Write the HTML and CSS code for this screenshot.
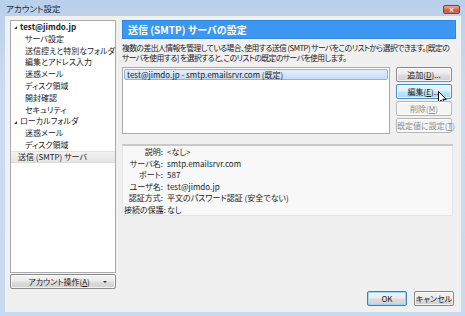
FILE: index.html
```html
<!DOCTYPE html>
<html lang="ja">

<head>
    <meta charset="UTF-8">
    <title>アカウント設定</title>
    <link rel="stylesheet" href="styles.css">
</head>

<body>
    <div class="window">
        <div class="titlebar">
            <span class="title">アカウント設定</span>
            <span class="close-btn">&#x2715;</span>
        </div>
        <div class="client">
            <aside class="sidebar">
                <ul class="tree">
                    <li class="tree-group"><span class="twisty"></span><b>test@jimdo.jp</b></li>
                    <li class="tree-leaf">サーバ設定</li>
                    <li class="tree-leaf">送信控えと特別なフォルダ</li>
                    <li class="tree-leaf">編集とアドレス入力</li>
                    <li class="tree-leaf">迷惑メール</li>
                    <li class="tree-leaf">ディスク領域</li>
                    <li class="tree-leaf">開封確認</li>
                    <li class="tree-leaf">セキュリティ</li>
                    <li class="tree-group"><span class="twisty"></span>ローカルフォルダ</li>
                    <li class="tree-leaf">迷惑メール</li>
                    <li class="tree-leaf">ディスク領域</li>
                    <li class="tree-top selected">送信 (SMTP) サーバ</li>
                </ul>
                <button class="btn btn-menu">アカウント操作(<u>A</u>)<span class="menu-dot"></span></button>
            </aside>

            <section class="pane">
                <h1 class="pane-header">送信 (SMTP) サーバの設定</h1>
                <p class="pane-desc">複数の差出人情報を管理している場合、使用する送信 (SMTP) サーバをこのリストから選択できます。[既定の<br>サーバを使用する] を選択すると、このリストの既定のサーバを使用します。</p>

                <div class="server-row">
                    <ul class="server-list">
                        <li class="selected">test@jimdo.jp - smtp.emailsrvr.com (既定)</li>
                    </ul>
                    <div class="server-actions">
                        <button class="btn">追加(<u>D</u>)...</button>
                        <button class="btn btn-hover">編集(<u>E</u>)...
                            <svg class="cursor" width="10" height="15" viewBox="0 0 10 15">
                                <path d="M0.5 0.5 L0.5 11.5 L3 9 L5 13.5 L6.8 12.7 L4.9 8.4 L8.3 8.4 Z" fill="#fff" stroke="#000" stroke-width="1" stroke-linejoin="round"/>
                            </svg>
                        </button>
                        <button class="btn" disabled>削除(<u>M</u>)</button>
                        <button class="btn" disabled>既定値に設定(<u>T</u>)</button>
                    </div>
                </div>

                <dl class="details">
                    <dt>説明:</dt><dd>&lt;なし&gt;</dd>
                    <dt>サーバ名:</dt><dd>smtp.emailsrvr.com</dd>
                    <dt>ポート:</dt><dd>587</dd>
                    <dt>ユーザ名:</dt><dd>test@jimdo.jp</dd>
                    <dt>認証方式:</dt><dd>平文のパスワード認証 (安全でない)</dd>
                    <dt>接続の保護:</dt><dd>なし</dd>
                </dl>

                <div class="dialog-buttons">
                    <button class="btn btn-default">OK</button>
                    <button class="btn">キャンセル</button>
                </div>
            </section>
        </div>
    </div>
</body>

</html>
```

FILE: styles.css
```css
:root {
    --frame-color: #c3d8ef;
    --client-bg: #f0f0f0;
    --border-color: #a9abae;
    --header-blue: #3a97f2;
    --text-color: #1a1a1a;
    --disabled-text: #8d8d8d;
    --font-family: 'Noto Sans CJK JP', 'Noto Sans', sans-serif;
}

* {
    box-sizing: border-box;
    margin: 0;
    padding: 0;
}

body {
    width: 465px;
    height: 316px;
    overflow: hidden;
    font-family: var(--font-family);
    font-feature-settings: "palt";
    font-size: 8px;
    color: var(--text-color);
    background-color: var(--frame-color);
}

.window {
    width: 465px;
    height: 316px;
    display: flex;
    flex-direction: column;
    background: linear-gradient(to bottom, #b9d0ea 0%, #cadcf1 30%, #c6daf0 100%);
}

.titlebar {
    height: 16px;
    flex-shrink: 0;
    display: flex;
    align-items: center;
    justify-content: space-between;
    padding: 0 5px 0 6px;
}

.title {
    font-size: 8.5px;
    color: #1e2a38;
}

.close-btn {
    width: 17px;
    height: 9px;
    margin-top: 2px;
    border-radius: 2px;
    border: 1px solid #8c3a2c;
    background: linear-gradient(to bottom, #e9a99b 0%, #d4705c 50%, #c24a33 51%, #d27660 100%);
    color: #fff;
    font-size: 6px;
    line-height: 7px;
    text-align: center;
    font-weight: 700;
}

.client {
    flex: 1;
    min-height: 0;
    margin: 0 4px 4px 5px;
    background-color: var(--client-bg);
    display: flex;
    padding: 4px 5px 6px 5px;
    gap: 6px;
}

/* Left tree */
.sidebar {
    width: 106px;
    flex-shrink: 0;
    display: flex;
    flex-direction: column;
}

.tree {
    list-style: none;
    height: 253px;
    background-color: #fff;
    border: 1px solid var(--border-color);
}

.tree li {
    height: 11.8px;
    line-height: 11.8px;
    white-space: nowrap;
}

.tree-group {
    padding-left: 2px;
    display: flex;
    align-items: center;
}

.tree-group b {
    font-weight: 700;
}

.twisty {
    width: 0;
    height: 0;
    border-left: 3px solid transparent;
    border-bottom: 3px solid #3a3a3a;
    margin: 2px 3px 0 1px;
}

.tree-leaf {
    padding-left: 14px;
}

.tree-top {
    padding-left: 7px;
}

.tree li.selected {
    background: linear-gradient(to bottom, #f2f2f2, #e5e5e5);
    border-top: 1px solid #e2e2e2;
    border-bottom: 1px solid #dcdcdc;
    height: 12.5px;
    line-height: 10.5px;
}

/* Buttons */
.btn {
    position: relative;
    font-family: var(--font-family);
    font-feature-settings: "palt";
    font-size: 8px;
    color: var(--text-color);
    height: 15px;
    padding: 0;
    white-space: nowrap;
    border: 1px solid #8a8a8a;
    border-radius: 2px;
    background: linear-gradient(to bottom, #f3f3f3 0%, #ebebeb 48%, #dddddd 52%, #d0d0d0 100%);
    box-shadow: inset 0 0 0 1px rgba(255, 255, 255, 0.7);
    cursor: default;
}

.btn u {
    text-decoration: underline;
}

.btn:disabled {
    color: var(--disabled-text);
    border-color: #b5b5b5;
    background: #f4f4f4;
}

.btn-hover {
    border-color: #4c8cbf;
    background: linear-gradient(to bottom, #eaf6fd 0%, #d9f0fc 48%, #bee6fd 52%, #a7d9f5 100%);
}

.btn-default {
    border-color: #3c7fb1;
    box-shadow: inset 0 0 0 1px #9fd6f6;
}

.btn-menu {
    margin-top: 1px;
    width: 106px;
    padding-right: 8px;
}

.menu-dot {
    position: absolute;
    right: 8px;
    top: 6px;
    width: 0;
    height: 0;
    border-left: 2px solid transparent;
    border-right: 2px solid transparent;
    border-top: 2px solid #333;
}

.cursor {
    position: absolute;
    left: 41px;
    top: 6px;
}

/* Right pane */
.pane {
    flex: 1;
    min-width: 0;
    display: flex;
    flex-direction: column;
}

.pane-header {
    height: 19px;
    background-color: var(--header-blue);
    border: 1px solid #2f86dc;
    color: #fff;
    font-size: 10px;
    font-weight: 700;
    line-height: 17px;
    padding-left: 5px;
}

.pane-desc {
    margin-top: 4px;
    font-size: 7.8px;
    line-height: 10px;
    white-space: nowrap;
    letter-spacing: -0.55px;
}

.server-row {
    display: flex;
    gap: 6px;
    margin-top: 4px;
    margin-right: 4px;
}

.server-list {
    flex: 1;
    list-style: none;
    height: 67px;
    background-color: #fff;
    border: 1px solid var(--border-color);
    padding: 1px;
}

.server-list li {
    height: 11px;
    line-height: 9px;
    padding-left: 2px;
    border: 1px solid #8fb3dc;
    border-radius: 2px;
    background: linear-gradient(to bottom, #e3eefb, #c8ddf7);
}

.server-actions {
    width: 56px;
    display: flex;
    flex-direction: column;
    gap: 2px;
}

.server-actions .btn {
    width: 56px;
}

.details {
    margin-top: 10px;
    margin-right: 3px;
    height: 72px;
    background-color: #f8f8f8;
    border: 1px solid #e4e4e4;
    border-top: 2px solid #c9c9c9;
    display: grid;
    grid-template-columns: 39px 1fr;
    grid-auto-rows: 11.6px;
    column-gap: 4px;
    align-content: start;
    line-height: 11.6px;
    padding-left: 1px;
}

.details dt {
    text-align: right;
    white-space: nowrap;
}

.details dd {
    white-space: nowrap;
}

.dialog-buttons {
    margin-top: auto;
    display: flex;
    justify-content: flex-end;
    gap: 7px;
    margin-right: 2px;
}

.dialog-buttons .btn-default {
    width: 38px;
}

.dialog-buttons .btn {
    width: 40px;
}
```
